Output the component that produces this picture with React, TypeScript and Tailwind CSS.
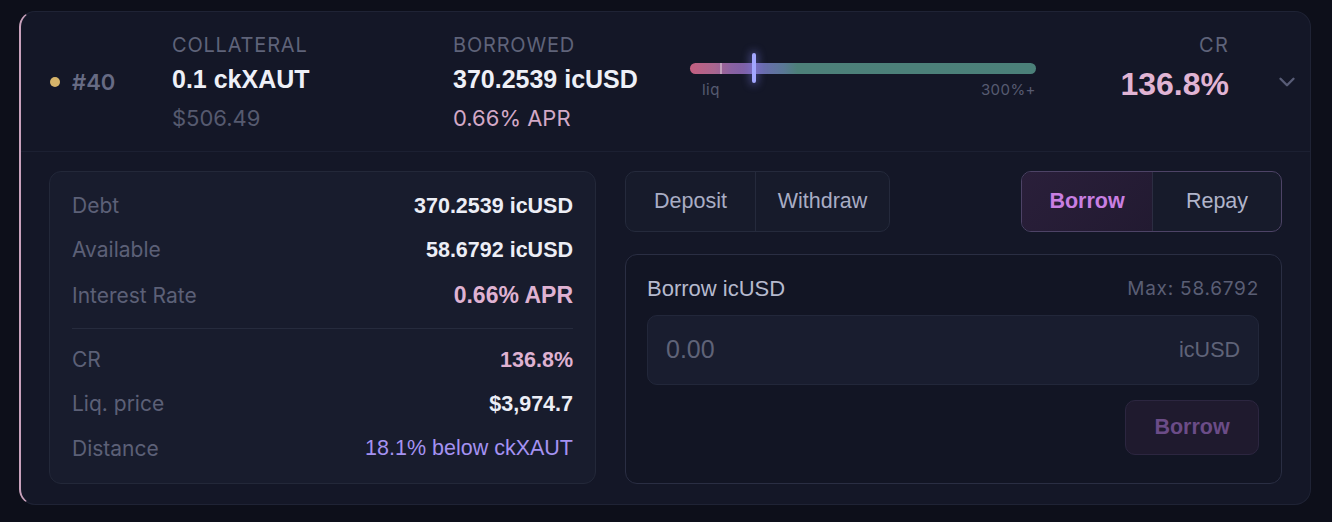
import { ChevronDown } from "lucide-react";

const inter = { fontFamily: "Inter, 'Noto Sans', sans-serif" };
const helv = { fontFamily: "'Liberation Sans', Arial, sans-serif" };

type RowProps = {
  label: string;
  value: string;
  tone?: "white" | "pink" | "violet";
  height?: string;
};

const StatRow = ({ label, value, tone = "white", height = "h-[44px]" }: RowProps) => {
  const valueClass =
    tone === "pink"
      ? "text-[#dfb2d2] font-bold"
      : tone === "violet"
      ? "text-[#a592f2] font-normal text-[21.5px]"
      : "text-[#eceef6] font-bold text-[21.5px]";
  return (
    <div className={`flex ${height} items-center justify-between`}>
      <span style={inter} className="text-[21px] text-[#5c6077]">{label}</span>
      <span style={helv} className={`${tone === "pink" && label !== "CR" ? "text-[23px]" : "text-[21.5px]"} ${valueClass}`}>
        {value}
      </span>
    </div>
  );
};

const HealthBar = () => (
  <div className="mt-[51px] w-[346px]">
    <div className="relative h-[11px] w-full rounded-full bg-[linear-gradient(to_right,#c45f80_0%,#a9668f_7%,#8a62a2_12%,#7a60a8_17%,#6a6cae_21%,#5a7896_27%,#4d8079_31%,#4b8079_100%)]">
      <div className="absolute left-[30px] top-0 h-[11px] w-[1.5px] bg-[#dcc6d6] opacity-60" />
      <div className="absolute left-[62px] top-[-10px] h-[30px] w-[4px] rounded-full bg-[#a3a7ff] shadow-[0_0_8px_2px_rgba(140,140,255,0.4)]" />
    </div>
    <div style={inter} className="mt-[8px] flex justify-between pl-[12px] text-[15px] leading-[16px] tracking-[0.03em] text-[#575b71]">
      <span>liq</span>
      <span>300%+</span>
    </div>
  </div>
);

export default function App() {
  return (
    <div style={inter} className="min-h-[522px] w-full bg-[#0d0f1a] px-[19px] pt-[11px]">
      <div className="w-[1292px] overflow-hidden rounded-[16px] border border-[#1f2335] border-l-2 border-l-[#c9a2bd] bg-[#141727]">
        {/* header */}
        <div className="flex h-[140px] items-start border-b border-[#1c2032] pl-[28px] pr-[10px]">
          <div className="flex w-[123px] items-center gap-[12px] self-center">
            <span className="ml-[1px] h-[10px] w-[10px] rounded-full bg-[#d6b46a]" />
            <span className="text-[22px] font-semibold leading-[26px] text-[#676b84]">#40</span>
          </div>
          <div className="mt-[21px] flex w-[281px] flex-col">
            <span className="text-[20px] uppercase leading-[24px] tracking-[0.04em] text-[#5f6379]">Collateral</span>
            <span style={helv} className="mt-[7px] text-[25px] font-bold leading-[30px] text-[#eef0f7]">0.1 ckXAUT</span>
            <span className="mt-[11px] text-[22px] leading-[26px] text-[#565a6f]">$506.49</span>
          </div>
          <div className="mt-[21px] flex w-[237px] flex-col">
            <span className="text-[20px] uppercase leading-[24px] tracking-[0.04em] text-[#5f6379]">Borrowed</span>
            <span style={helv} className="mt-[7px] text-[25px] font-bold leading-[30px] text-[#eef0f7]">370.2539 icUSD</span>
            <span className="mt-[11px] text-[22px] leading-[26px] text-[#d3a9c7]">0.66% APR</span>
          </div>
          <HealthBar />
          <div className="mt-[21px] flex flex-1 flex-col items-end">
            <span className="text-[20px] leading-[24px] tracking-[0.06em] text-[#5f6379]">CR</span>
            <span style={helv} className="mt-[9px] text-[32px] font-bold leading-[36px] text-[#e0b4d4]">136.8%</span>
          </div>
          <div className="ml-[45px] flex w-[26px] justify-center self-center">
            <ChevronDown size={26} strokeWidth={2.2} className="text-[#585c76]" />
          </div>
        </div>

        {/* body */}
        <div className="flex gap-[29px] px-[28px] pb-[20px] pt-[19px]">
          <div className="w-[547px] rounded-[12px] border border-[#232839] bg-[#181c2d] px-[22px] pb-[12px] pt-[12px]">
            <StatRow label="Debt" value="370.2539 icUSD" />
            <StatRow label="Available" value="58.6792 icUSD" />
            <StatRow label="Interest Rate" value="0.66% APR" tone="pink" height="h-[47px]" />
            <div className="my-[9px] h-px bg-[#262b3d]" />
            <StatRow label="CR" value="136.8%" tone="pink" />
            <StatRow label="Liq. price" value="$3,974.7" />
            <StatRow label="Distance" value="18.1% below ckXAUT" tone="violet" height="h-[45px]" />
          </div>

          <div style={helv} className="flex flex-1 flex-col">
            <div className="flex justify-between">
              <div className="flex h-[61px] overflow-hidden rounded-[10px] border border-[#252a3c] bg-[#171b2b] text-[21.5px] text-[#a9adc4]">
                <button className="w-[129px]">Deposit</button>
                <button className="w-[134px] border-l border-[#252a3c]">Withdraw</button>
              </div>
              <div className="flex h-[61px] overflow-hidden rounded-[10px] border border-[#4d4366] bg-[#171b2b] text-[21.5px] text-[#b0b4ca]">
                <button className="w-[130px] bg-[linear-gradient(135deg,#2a1f3a,#221a31)] font-bold text-[#c97fe2]">Borrow</button>
                <button className="w-[129px] border-l border-[#2c2d42]">Repay</button>
              </div>
            </div>

            <div className="mt-[22px] flex-1 rounded-[12px] border border-[#2a2e43] bg-[#121524] pb-[27px] pl-[21px] pr-[22px] pt-[21px]">
              <div className="flex items-center justify-between leading-[26px]">
                <span className="text-[22px] text-[#b6bace]">Borrow icUSD</span>
                <span style={inter} className="text-[19px] tracking-[0.04em] text-[#5a5e74]">Max: 58.6792</span>
              </div>
              <div className="mt-[13px] flex h-[70px] items-center justify-between rounded-[10px] border border-[#22273a] bg-[#191d2f] px-[18px]">
                <span className="text-[25px] text-[#5f6378]">0.00</span>
                <span className="text-[21.5px] text-[#5f6378]">icUSD</span>
              </div>
              <div className="mt-[15px] flex justify-end">
                <button className="h-[55px] w-[134px] rounded-[10px] border border-[#2c2640] bg-[#1f1a2e] text-[21.5px] font-bold text-[#6b4c87]">
                  Borrow
                </button>
              </div>
            </div>
          </div>
        </div>
      </div>
    </div>
  );
}
